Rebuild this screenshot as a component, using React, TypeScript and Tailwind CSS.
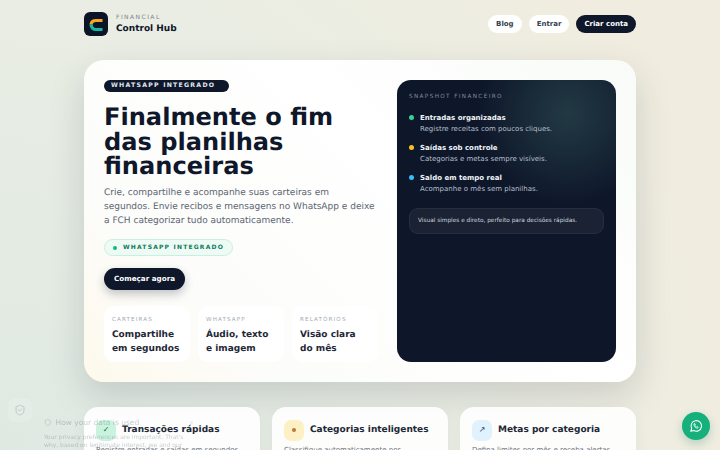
import { ShieldCheck, Shield, X } from "lucide-react";

const points = [
  { color: "bg-[#34d399]", title: "Entradas organizadas", text: "Registre receitas com poucos cliques." },
  { color: "bg-[#fbbf24]", title: "Saídas sob controle", text: "Categorias e metas sempre visíveis." },
  { color: "bg-[#38bdf8]", title: "Saldo em tempo real", text: "Acompanhe o mês sem planilhas." },
];

const stats = [
  { label: "CARTEIRAS", one: "Compartilhe", two: "em segundos" },
  { label: "WHATSAPP", one: "Áudio, texto", two: "e imagem" },
  { label: "RELATÓRIOS", one: "Visão clara", two: "do mês" },
];

const Logo = () => (
  <svg width="24" height="24" viewBox="0 0 24 24" fill="none">
    <rect width="24" height="24" rx="6" fill="#0b1526" />
    <path d="M18.500 8.500H12C9.200 8.500 7.300 10.200 7 12.500" stroke="#f5a524" strokeWidth="3.200" />
    <path d="M7 12.300C7.200 15.400 9.200 17.500 12 17.500H18.500" stroke="#14b8a6" strokeWidth="3.200" />
  </svg>
);

const WhatsappIcon = () => (
  <svg width="14" height="14" viewBox="0 0 24 24" fill="none" stroke="white" strokeWidth="1.800" strokeLinecap="round" strokeLinejoin="round">
    <path d="M3 21l1.650-4.800A9 9 0 1 1 8 19.600L3 21z" />
    <path d="M9 8.500c-.6.500-.8 1.400-.4 2.400a7 7 0 0 0 4.500 4.500c1 .4 1.900.2 2.400-.4l.4-1-2-1-.8.8a5 5 0 0 1-2.900-2.900l.8-.8-1-2-1 .4z" strokeWidth="1.300" />
  </svg>
);

export default function App() {
  return (
    <div className="relative h-[450px] w-[720px] overflow-hidden bg-[radial-gradient(circle_at_0%_100%,#dfe9e2_0%,#e8ede4_45%,#f0ede0_85%)] font-['DejaVu_Sans',sans-serif] [text-rendering:geometricPrecision] text-[#0f172a]">
      <div className="mx-auto w-[552px]">
        <header className="flex h-[60px] items-center justify-between pb-[12px]">
          <div className="flex items-center gap-[8px]">
            <Logo />
            <div>
              <p className="text-[6px] leading-[10px] tracking-[0.24em] text-[#7c838d]">FINANCIAL</p>
              <p className="text-[9px] leading-[13px] font-bold">Control Hub</p>
            </div>
          </div>
          <nav className="flex items-center gap-[7px] text-[7px] font-bold">
            <a className="flex h-[18px] items-center rounded-full bg-white px-[8px] text-[#374151]">Blog</a>
            <a className="flex h-[18px] items-center rounded-full bg-white px-[8px] text-[#374151]">Entrar</a>
            <a className="flex h-[18px] items-center rounded-full bg-[#0f172a] px-[8px] text-white">Criar conta</a>
          </nav>
        </header>

        <main className="flex h-[322px] justify-between rounded-[20px] bg-[linear-gradient(45deg,#fdf9ec_0%,#fcfcfa_22%,#ffffff_60%,#f8fbf8_100%)] p-[20px] shadow-[0_14px_36px_rgba(15,23,42,0.15)]">
          <div className="w-[274px]">
            <span className="flex h-[12px] w-[125px] items-center rounded-full bg-[#0f172a] px-[7px] text-[6.200px] font-bold tracking-[0.2em] text-[#e2e8f0]">WHATSAPP INTEGRADO</span>
            <h1 className="mt-[13px] text-[24.100px] leading-[24.500px] font-bold">Finalmente o fim das planilhas financeiras</h1>
            <p className="mt-[7.500px] max-w-[272px] text-[9px] leading-[14px] text-[#5b6472]">Crie, compartilhe e acompanhe suas carteiras em segundos. Envie recibos e mensagens no WhatsApp e deixe a FCH categorizar tudo automaticamente.</p>
            <span className="mt-[11px] flex h-[17px] w-[129px] items-center gap-[6px] rounded-full border border-[#c9f0df] bg-[#edfbf4] px-[8px] text-[6px] font-bold tracking-[0.2em] whitespace-nowrap text-[#0f7a5c]">
              <i className="h-[4px] w-[4px] rounded-full bg-[#10b981]" />
              WHATSAPP INTEGRADO
            </span>
            <button className="mt-[12px] flex h-[22px] items-center rounded-full bg-[#0f172a] px-[10px] text-[7.200px] font-bold text-white shadow-[0_4px_10px_rgba(15,23,42,0.25)]">Começar agora</button>
            <div className="mt-[16px] grid grid-cols-3 gap-[8px]">
              {stats.map((s) => (
                <div key={s.label} className="h-[56px] rounded-[10px] bg-white px-[8px] pt-[10px]">
                  <p className="text-[5.600px] leading-[8px] tracking-[0.2em] text-[#a3a9b2]">{s.label}</p>
                  <p className="mt-[4px] text-[9px] leading-[14px] font-bold text-[#1f2937]">{s.one}<br />{s.two}</p>
                </div>
              ))}
            </div>
          </div>

          <aside className="w-[219px] rounded-[14px] bg-[radial-gradient(circle_at_78%_12%,#223a44_0%,#0e172a_90px)] px-[12px] py-[14px]">
            <p className="text-[5.700px] leading-[7px] tracking-[0.24em] text-[#7f8b9b]">SNAPSHOT FINANCEIRO</p>
            <ul className="mt-[12px] flex flex-col gap-[9px]">
              {points.map((p) => (
                <li key={p.title} className="flex gap-[6px]">
                  <i className={`mt-[2px] h-[5px] w-[5px] shrink-0 rounded-full ${p.color}`} />
                  <div>
                    <p className="text-[7px] leading-[10.500px] font-bold text-[#f1f5f9]">{p.title}</p>
                    <p className="text-[7px] leading-[10.500px] text-[#b6bfcc]">{p.text}</p>
                  </div>
                </li>
              ))}
            </ul>
            <div className="mt-[14px] flex h-[26px] items-center rounded-[9px] border border-white/5 bg-white/5 px-[8px] text-[5.800px] text-[#cbd2dc]">Visual simples e direto, perfeito para decisões rápidas.</div>
          </aside>
        </main>

        <section className="mt-[25px] grid grid-cols-3 gap-[12px]">
          <Card iconBg="bg-[#c9f3de]" icon={<span className="text-[8px] leading-none text-[#166534]">✓</span>} title="Transações rápidas" text="Registre entradas e saídas em segundos" />
          <Card iconBg="bg-[#fdf0c4]" icon={<i className="h-[4px] w-[4px] rounded-full bg-[#b7793a]" />} title="Categorias inteligentes" text="Classifique automaticamente por" />
          <Card iconBg="bg-[#dff2fd]" icon={<span className="text-[8px] leading-none text-[#1e4e79]">↗</span>} title="Metas por categoria" text="Defina limites por mês e receba alertas" />
        </section>
      </div>

      {/* cookie banner, faded out behind the page */}
      <div className="pointer-events-none absolute top-[398px] left-[8px] flex h-[24px] w-[24px] items-center justify-center rounded-[7px] bg-white/20 opacity-60 blur-[0.5px]">
        <ShieldCheck size={12} className="text-[#aab4b0]" />
      </div>
      <div className="pointer-events-none absolute top-[417px] left-[44px] w-[150px] opacity-35 blur-[0.5px]">
        <div className="flex items-center gap-[4px] text-[7.500px] whitespace-nowrap text-[#6b7280]">
          <Shield size={11} />
          How your data is used
          <X size={7} className="ml-[46px]" />
        </div>
        <p className="mt-[6px] text-[6px] leading-[7.500px] whitespace-nowrap text-[#6b7280]">Your privacy preferences are important. That's<br />why, based on legitimate interest, we and our</p>
      </div>

      <button className="absolute top-[412px] left-[682px] flex h-[28px] w-[28px] items-center justify-center rounded-full bg-[#16b07c] shadow-[0_4px_10px_rgba(16,120,90,0.25)]">
        <WhatsappIcon />
      </button>
    </div>
  );
}

function Card({ iconBg, icon, title, text }: { iconBg: string; icon: React.ReactNode; title: string; text: string }) {
  return (
    <div className="h-[70px] rounded-[14px] bg-white/90 px-[12px] pt-[12px] shadow-[0_6px_16px_rgba(15,23,42,0.05)]">
      <div className="flex items-center gap-[6px]">
        <span className={`flex h-[21px] w-[20px] items-center justify-center rounded-[7px] ${iconBg}`}>{icon}</span>
        <h3 className="pt-[1px] text-[9px] leading-[21px] font-bold whitespace-nowrap text-[#1f2937]">{title}</h3>
      </div>
      <p className="mt-[4px] text-[7px] leading-[11px] whitespace-nowrap text-[#6b7280]">{text}</p>
    </div>
  );
}
